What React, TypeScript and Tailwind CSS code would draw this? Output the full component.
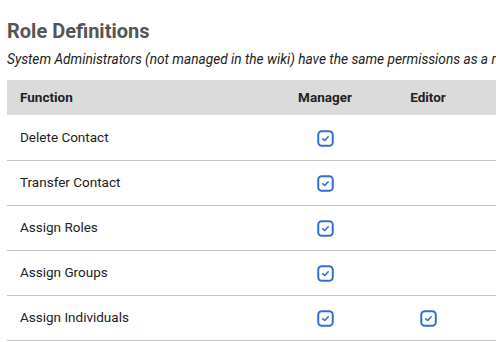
const ROWS: { name: string; manager: boolean; editor: boolean }[] = [
  { name: "Delete Contact", manager: true, editor: false },
  { name: "Transfer Contact", manager: true, editor: false },
  { name: "Assign Roles", manager: true, editor: false },
  { name: "Assign Groups", manager: true, editor: false },
  { name: "Assign Individuals", manager: true, editor: true },
];

function Check() {
  return (
    <svg width="17" height="17" viewBox="0 0 17 17" className="inline-block align-middle">
      <rect x="1.25" y="1.25" width="14.5" height="14.5" rx="3.5" fill="white" stroke="#2f6fd6" strokeWidth="2" />
      <path d="M5.8 8.8 L7.7 10.5 L11.2 6.8" fill="none" stroke="#2f6fd6" strokeWidth="1.6" strokeLinecap="round" strokeLinejoin="round" />
    </svg>
  );
}

export default function App() {
  return (
    <div className="w-[496px] h-[342px] overflow-hidden bg-white pl-[7px] pt-[19px] font-['Roboto',sans-serif]">
      <h2 className="text-[20px] leading-[24px] font-bold text-[#555]">Role Definitions</h2>
      <p className="mt-[8px] text-[13.7px] leading-[16px] italic text-[#222] whitespace-nowrap">
        System Administrators (not managed in the wiki) have the same permissions as a manager.
      </p>
      <table className="mt-[13px] w-[560px] border-collapse text-[13.5px] text-[#222]">
        <thead>
          <tr className="bg-[#dcdbdc] h-[35px]">
            <th className="w-[268px] pl-[13px] text-left font-bold">Function</th>
            <th className="w-[100px] text-center font-bold">Manager</th>
            <th className="w-[106px] text-center font-bold">Editor</th>
            <th />
          </tr>
        </thead>
        <tbody>
          {ROWS.map((r) => (
            <tr key={r.name} className="h-[45px] border-b-[1.5px] border-[#c4c4c4]">
              <td className="pl-[13px]">{r.name}</td>
              <td className="text-center">{r.manager && <Check />}</td>
              <td className="text-center">{r.editor && <Check />}</td>
              <td />
            </tr>
          ))}
        </tbody>
      </table>
    </div>
  );
}
